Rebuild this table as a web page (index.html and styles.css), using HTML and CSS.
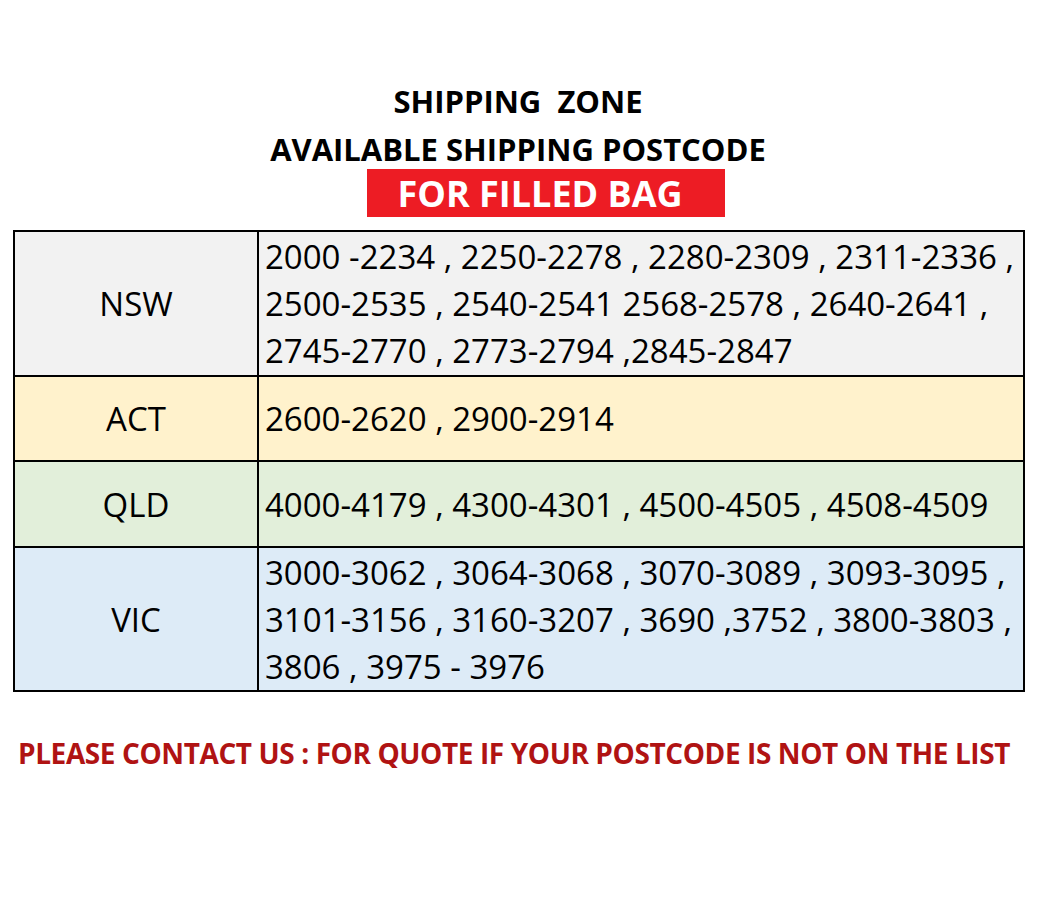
FILE: index.html
```html
<!DOCTYPE html>
<html>
<head>
<meta charset="utf-8">
<link rel="stylesheet" href="styles.css">
</head>
<body>
<div class="page">
  <header class="heading">
    <div class="title">SHIPPING&nbsp; ZONE</div>
    <div class="subtitle">AVAILABLE SHIPPING POSTCODE</div>
    <div class="badge">FOR FILLED BAG</div>
  </header>
  <table class="zones">
    <tr class="nsw">
      <td class="state">NSW</td>
      <td class="codes">2000 -2234 , 2250-2278 , 2280-2309 , 2311-2336 ,<br>2500-2535 , 2540-2541 2568-2578 , 2640-2641 ,<br>2745-2770 , 2773-2794 ,2845-2847</td>
    </tr>
    <tr class="act">
      <td class="state">ACT</td>
      <td class="codes">2600-2620 , 2900-2914</td>
    </tr>
    <tr class="qld">
      <td class="state">QLD</td>
      <td class="codes">4000-4179 , 4300-4301 , 4500-4505 , 4508-4509</td>
    </tr>
    <tr class="vic">
      <td class="state">VIC</td>
      <td class="codes">3000-3062 , 3064-3068 , 3070-3089 , 3093-3095 ,<br>3101-3156 , 3160-3207 , 3690 ,3752 , 3800-3803 ,<br>3806 , 3975 - 3976</td>
    </tr>
  </table>
  <p class="notice">PLEASE CONTACT US : FOR QUOTE IF YOUR POSTCODE IS NOT ON THE LIST</p>
</div>
</body>
</html>
```
FILE: styles.css
```css
html, body {
  margin: 0;
  padding: 0;
  background: #ffffff;
}
body {
  font-family: "Open Sans", "Liberation Sans", sans-serif;
  color: #000;
}
.page {
  width: 1050px;
  padding-top: 80px;
}
.heading {
  display: flex;
  flex-direction: column;
  align-items: center;
}
.title {
  font-weight: 700;
  font-size: 31px;
  line-height: 42px;
  margin-left: -14px;
}
.subtitle {
  font-weight: 700;
  font-size: 31px;
  line-height: 48px;
  margin-top: 3px;
  margin-left: -14px;
}
.badge {
  background: #ed1c24;
  color: #fff;
  font-weight: 700;
  font-size: 36px;
  line-height: 46px;
  padding-top: 2px;
  width: 358px;
  box-sizing: border-box;
  padding-left: 31px;
  margin-left: 41px;
  margin-top: -4px;
}
.zones {
  border-collapse: collapse;
  margin: 13px 0 0 13px;
  width: 1012px;
}
.zones td {
  border: 2px solid #000;
  padding: 0;
  font-size: 33px;
  line-height: 47px;
}
.state {
  width: 242px;
  text-align: center;
}
.codes {
  padding-left: 6px !important;
}
.nsw td { background: #f2f2f2; height: 143px; }
.act td { background: #fff2cc; height: 83px; }
.qld td { background: #e2efda; height: 84px; }
.vic td { background: #ddebf7; height: 142px; }
.notice {
  margin: 46px 0 0 18px;
  color: #b01313;
  font-weight: 700;
  font-size: 28px;
  line-height: 30px;
  letter-spacing: -0.4px;
  white-space: nowrap;
}
```
